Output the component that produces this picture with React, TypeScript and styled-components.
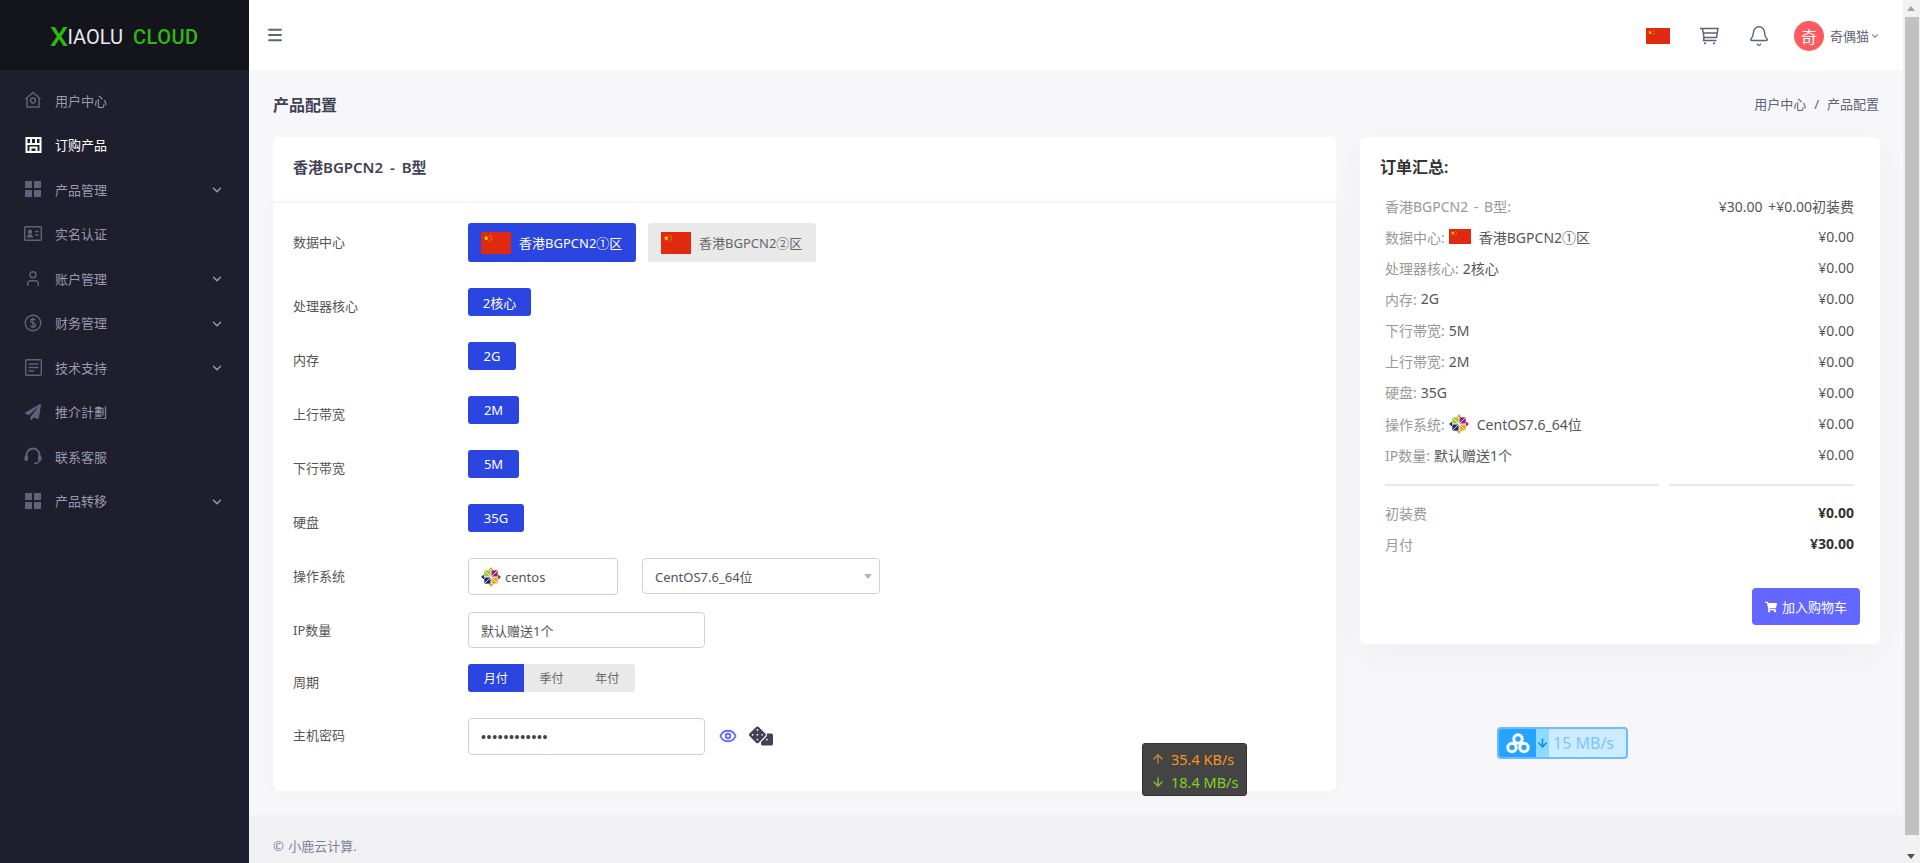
import React from "react";
import styled, { createGlobalStyle } from "styled-components";
import { ArrowDown, ArrowUp, Bell, ChevronDown, Eye, Menu, User } from "lucide-react";
import { FaDice, FaPaperPlane, FaShoppingCart } from "react-icons/fa";

const FONT = `"Noto Sans", "Noto Sans CJK SC", sans-serif`;

const GlobalStyle = createGlobalStyle`
  html, body {
    margin: 0;
    padding: 0;
    height: 863px;
    overflow: hidden;
    background: #f7f7f9;
    font-family: ${FONT};
  }
  * { box-sizing: border-box; }
`;

const Page = styled.div`
  position: relative;
  display: flex;
  width: 1920px;
  height: 863px;
  overflow: hidden;
`;

const Sidebar = styled.aside`
  width: 249px;
  flex-shrink: 0;
  background: #1e1e2d;
`;

const LogoBar = styled.div`
  height: 70px;
  background: #14141d;
  display: flex;
  align-items: center;
  padding: 3px 0 0 50px;
  font-family: Roboto, sans-serif;
  font-size: 20px;
`;

const LogoX = styled.span`
  color: #2fba0e;
  font-weight: 500;
  font-size: 26px;
  line-height: 20px;
  margin-right: 1px;
  transform: scaleX(1.1);
  transform-origin: left center;
`;

const LogoWhite = styled.span`
  color: #e9e9ee;
  margin-right: 10px;
`;

const LogoGreen = styled.span`
  color: #2fba0e;
  font-weight: 500;
  letter-spacing: 0.5px;
`;

const Nav = styled.nav`
  padding-top: 8px;
`;

const NavItem = styled.div<{ $active?: boolean }>`
  height: 44.5px;
  display: flex;
  align-items: center;
  padding: 0 25px 0 24px;
  font-size: 13px;
  color: ${(p) => (p.$active ? "#ffffff" : "#9899ac")};
`;

const NavIcon = styled.span<{ $active?: boolean }>`
  width: 18px;
  height: 18px;
  margin-right: 13px;
  display: flex;
  align-items: center;
  justify-content: center;
  color: ${(p) => (p.$active ? "#ffffff" : "#5f6279")};
`;

const NavText = styled.span`
  flex: 1;
`;

const NavChevron = styled(ChevronDown)`
  color: #9899ac;
  width: 14px;
  height: 14px;
  stroke-width: 2.5;
  margin-top: 2px;
`;

const Main = styled.div`
  flex: 1;
  min-width: 0;
  display: flex;
  flex-direction: column;
`;

const TopBar = styled.header`
  height: 70px;
  background: #fff;
  display: flex;
  align-items: center;
  padding: 0 23px 0 17px;
  color: #5e6278;
`;

const TopRight = styled.div`
  margin-left: auto;
  display: flex;
  align-items: center;
  padding-top: 1px;
`;

const TopFlag = styled.span`
  display: flex;
  margin-right: 28px;
`;

const TopIcon = styled.span`
  display: flex;
  width: 22px;
  justify-content: center;
  margin-right: 28px;
  color: #5e6278;
`;

const Avatar = styled.span`
  width: 30px;
  height: 30px;
  border-radius: 50%;
  background: #ff5a5f;
  color: #fff;
  font-size: 16px;
  display: flex;
  align-items: center;
  justify-content: center;
  margin-left: -4px;
  margin-right: 6px;
`;

const UserName = styled.span`
  font-size: 13px;
  color: #5e6278;
`;

const UserChevron = styled(ChevronDown)`
  width: 10px;
  height: 10px;
  margin-left: 1px;
  stroke-width: 2.5;
`;

const Content = styled.main`
  flex: 1;
  padding: 0 24px 0 24px;
`;

const PageHead = styled.div`
  height: 67px;
  display: flex;
  align-items: center;
  justify-content: space-between;
`;

const PageTitle = styled.h1`
  margin: 0;
  font-size: 16px;
  font-weight: 600;
  color: #3f4254;
`;

const Crumbs = styled.div`
  font-size: 13px;
  color: #5e6278;
`;

const CrumbSep = styled.span`
  margin: 0 8px;
`;

const Columns = styled.div`
  display: grid;
  grid-template-columns: 1063px 520px;
  gap: 24px;
  align-items: start;
`;

const ProductCol = styled.div`
  display: flex;
  flex-direction: column;
  gap: 2px;
`;

const TitleCard = styled.div`
  height: 64px;
  background: #fff;
  border-radius: 6px 6px 0 0;
  display: flex;
  align-items: center;
  padding-left: 20px;
  font-size: 15px;
  word-spacing: 3px;
  font-weight: 600;
  color: #3f4254;
  padding-bottom: 5px;
`;

const FormCard = styled.div`
  height: 588px;
  background: #fff;
  border-radius: 0 0 6px 6px;
  padding: 20px 0 0 20px;
  box-shadow: 0 0 20px rgba(76, 87, 125, 0.03);
`;

const Row = styled.div<{ $gap: number }>`
  display: flex;
  margin-bottom: ${(p) => p.$gap}px;
`;

const Label = styled.div<{ $top: number }>`
  width: 175px;
  flex-shrink: 0;
  font-size: 13px;
  line-height: 20px;
  color: #555;
  padding-top: ${(p) => p.$top}px;
`;

const Options = styled.div`
  display: flex;
  gap: 12px;
`;

const AreaButton = styled.div<{ $active?: boolean }>`
  width: 168px;
  height: 39px;
  border-radius: 3px;
  display: flex;
  align-items: center;
  padding-left: 13px;
  font-size: 13px;
  background: ${(p) => (p.$active ? "#2a45e0" : "#e9e9e9")};
  color: ${(p) => (p.$active ? "#fff" : "#666")};
`;

const AreaFlag = styled.span`
  display: flex;
  margin-right: 8px;
`;

const ChipButton = styled.div<{ $w: number }>`
  width: ${(p) => p.$w}px;
  height: 28px;
  border-radius: 3px;
  background: #2a45e0;
  color: #fff;
  font-size: 13px;
  display: flex;
  align-items: center;
  justify-content: center;
`;

const Field = styled.div<{ $w: number; $h: number }>`
  width: ${(p) => p.$w}px;
  height: ${(p) => p.$h}px;
  border: 1px solid #ced0d6;
  border-radius: 4px;
  background: #fff;
  display: flex;
  align-items: center;
  padding-left: 12px;
  font-size: 13px;
  color: #555;
`;

const OsField = styled(Field)`
  margin-right: 24px;
`;

const SelectField = styled(Field)`
  position: relative;
`;

const Caret = styled.span`
  position: absolute;
  right: 7px;
  top: 15px;
  border: 4px solid transparent;
  border-top: 5px solid #b4b4b4;
`;

const OsName = styled.span`
  margin-left: 4px;
`;

const Segments = styled.div`
  display: flex;
  width: 167px;
  height: 28px;
  border-radius: 3px;
  overflow: hidden;
  background: #e9e9e9;
`;

const Segment = styled.div<{ $active?: boolean }>`
  flex: 1;
  display: flex;
  align-items: center;
  justify-content: center;
  font-size: 12px;
  background: ${(p) => (p.$active ? "#2a45e0" : "transparent")};
  color: ${(p) => (p.$active ? "#fff" : "#666")};
`;

const PasswordText = styled.span`
  font-family: "Liberation Sans", sans-serif;
  font-size: 14px;
  letter-spacing: 0.7px;
  color: #444;
`;

const PasswordTools = styled.div`
  display: flex;
  align-items: center;
  gap: 12px;
  margin: -2px 0 0 14px;
`;

const SummaryCard = styled.aside`
  height: 507px;
  background: #fff;
  border-radius: 6px;
  padding: 20px 26px 0 20px;
  box-shadow: 0 10px 30px rgba(76, 87, 125, 0.05);
`;

const SummaryTitle = styled.h3`
  margin: 0 0 13px 0;
  font-size: 16px;
  line-height: 20px;
  font-weight: 600;
  color: #333;
`;

const SummaryRows = styled.div`
  padding-left: 5px;
`;

const SummaryRow = styled.div`
  height: 31.15px;
  display: flex;
  align-items: center;
  justify-content: space-between;
  font-size: 14px;
  word-spacing: 2px;
  color: #555;
`;

const RowName = styled.span`
  display: flex;
  align-items: center;
`;

const Muted = styled.span`
  color: #999;
  margin-right: 4px;
`;

const InlineLogo = styled.span`
  display: flex;
  margin: 0 8px 0 0;
`;

const Dividers = styled.div`
  display: grid;
  grid-template-columns: 274px 185px;
  gap: 10px;
  margin: 14px 0 0 5px;
`;

const Divider = styled.div`
  height: 2px;
  background: #e8e8ea;
`;

const Totals = styled.div`
  margin-top: 11px;
  padding-left: 5px;
`;

const TotalRow = styled.div`
  height: 31px;
  display: flex;
  align-items: center;
  justify-content: space-between;
  font-size: 14px;
  color: #999;
`;

const TotalValue = styled.span`
  font-weight: 700;
  color: #333;
`;

const CartRow = styled.div`
  display: flex;
  justify-content: flex-end;
  margin: 29px -6px 0 0;
`;

const CartButton = styled.div`
  width: 108px;
  height: 37px;
  border-radius: 4px;
  background: #6366ff;
  color: #fff;
  font-size: 13px;
  display: flex;
  align-items: center;
  justify-content: center;
  gap: 5px;
`;

const Footer = styled.footer`
  height: 48px;
  background: #f1f1f4;
  display: flex;
  align-items: center;
  padding: 12px 0 0 24px;
  font-size: 13px;
  word-spacing: 1px;
  color: #7e8299;
`;

const Scrollbar = styled.div`
  position: relative;
  width: 17px;
  flex-shrink: 0;
  background: #f1f1f1;
`;

const ScrollThumb = styled.div`
  position: absolute;
  left: 2px;
  right: 1px;
  top: 17px;
  height: 818px;
  background: #c1c1c1;
`;

const ScrollArrow = styled.span<{ $down?: boolean }>`
  position: absolute;
  left: 4px;
  border: 4px solid transparent;
  ${(p) =>
    p.$down
      ? "bottom: 4px; border-top: 5px solid #505050; border-bottom: 0;"
      : "top: 6px; border-bottom: 5px solid #a3a3a3; border-top: 0;"}
`;

const SpeedBadge = styled.div`
  position: absolute;
  left: 1142px;
  top: 743px;
  width: 105px;
  height: 53px;
  background: #444;
  border: 1px solid #333;
  border-radius: 3px;
  padding: 3px 0 0 8px;
  font-size: 14.5px;
`;

const SpeedLine = styled.div<{ $color: string; $arrow: string }>`
  height: 23.5px;
  display: flex;
  align-items: center;
  gap: 6px;
  color: ${(p) => p.$color};
  svg {
    color: ${(p) => p.$arrow};
  }
`;

const DiskBadge = styled.div`
  position: absolute;
  left: 1497px;
  top: 727px;
  width: 131px;
  height: 32px;
  border-radius: 4px;
  border: 2px solid #6cbcff;
  background: #ccecff;
  display: flex;
  align-items: center;
  overflow: hidden;
`;

const DiskLogo = styled.span`
  width: 37px;
  height: 100%;
  background: #24a5ff;
  display: flex;
  align-items: center;
  justify-content: center;
`;

const DiskArrow = styled.span`
  width: 13px;
  height: 100%;
  background: #8ddcff;
  color: #0490e6;
  display: flex;
  align-items: center;
  justify-content: center;
`;

const DiskSpeed = styled.span`
  margin-left: 4px;
  font-size: 16px;
  color: #7cc6fb;
`;

const FlagIcon: React.FC<{ w: number; h: number }> = ({ w, h }) => (
  <svg width={w} height={h} viewBox="0 0 30 20" preserveAspectRatio="none">
    <rect width="30" height="20" fill="#e02a10" />
    <g transform="translate(1.5 1.5) scale(0.75)">
      <polygon points="5,2 5.9,4.4 8.4,4.4 6.4,6 7.1,8.4 5,7 2.9,8.4 3.6,6 1.6,4.4 4.1,4.4" fill="#ffde00" />
      <circle cx="10" cy="2.2" r="0.8" fill="#f5b400" />
      <circle cx="12" cy="4.2" r="0.8" fill="#f5b400" />
      <circle cx="12" cy="7" r="0.8" fill="#f5b400" />
      <circle cx="10" cy="9" r="0.8" fill="#f5b400" />
    </g>
  </svg>
);

const CentosIcon: React.FC<{ size: number }> = ({ size }) => (
  <svg width={size} height={size} viewBox="0 0 24 24">
    <polygon points="12,0 15,3.5 9,3.5" fill="#efa724" />
    <polygon points="24,12 20.5,15 20.5,9" fill="#932279" />
    <polygon points="12,24 9,20.5 15,20.5" fill="#9ccd2a" />
    <polygon points="0,12 3.5,9 3.5,15" fill="#262577" />
    <rect x="4" y="4" width="7.4" height="7.4" fill="#9ccd2a" />
    <rect x="12.6" y="4" width="7.4" height="7.4" fill="#932279" />
    <rect x="12.6" y="12.6" width="7.4" height="7.4" fill="#efa724" />
    <rect x="4" y="12.6" width="7.4" height="7.4" fill="#262577" />
    <path d="M4 4l7.4 7.4M20 4l-7.4 7.4M20 20l-7.4-7.4M4 20l7.4-7.4" stroke="#fff" strokeWidth="1" />
  </svg>
);

const HomeIcon = () => (
  <svg width="18" height="18" viewBox="0 0 18 18" fill="none" stroke="currentColor" strokeWidth="1.5">
    <path d="M1.5 8 9 1.5 16.5 8M3 7v9h12V7" />
    <circle cx="9" cy="9.5" r="2.4" />
  </svg>
);

const ShopIcon = () => (
  <svg width="17" height="16" viewBox="0 0 17 16" fill="none" stroke="currentColor" strokeWidth="2">
    <path d="M1.5 1h14v14h-14zM1.5 7h14M6 1v6M11 1v6" />
    <path d="M5.5 15v-4.5h6V15" />
  </svg>
);

const GridIcon = () => (
  <svg width="16" height="16" viewBox="0 0 16 16" fill="currentColor">
    <rect width="7" height="7" />
    <rect x="9" width="7" height="7" />
    <rect y="9" width="7" height="7" />
    <rect x="9" y="9" width="7" height="7" />
  </svg>
);

const IdIcon = () => (
  <svg width="18" height="15" viewBox="0 0 18 15" fill="none" stroke="currentColor" strokeWidth="1.4">
    <rect x="0.7" y="0.7" width="16.6" height="13.6" rx="1" />
    <circle cx="6" cy="5.8" r="1.5" fill="currentColor" />
    <path d="M3.5 10.8c.4-2.6 4.6-2.6 5 0z" fill="currentColor" />
    <path d="M11 5.5h3.5M11 9h3.5" />
  </svg>
);

const CoinIcon = () => (
  <svg width="18" height="18" viewBox="0 0 18 18" fill="none" stroke="currentColor" strokeWidth="1.4">
    <circle cx="9" cy="9" r="7.8" />
    <path d="M11.5 6.3C11 5.3 10 5 9 5 7.6 5 6.6 5.7 6.6 6.9 6.6 9.5 11.6 8.3 11.6 11 11.6 12.3 10.5 13 9 13 7.8 13 6.8 12.6 6.3 11.6M9 3.7v10.6" strokeWidth="1.3" />
  </svg>
);

const ArticleIcon = () => (
  <svg width="17" height="17" viewBox="0 0 17 17" fill="none" stroke="currentColor" strokeWidth="1.4">
    <rect x="0.7" y="0.7" width="15.6" height="15.6" rx="1" />
    <path d="M3.5 5h10M3.5 8.5h10M3.5 12h5.5" />
  </svg>
);

const HeadsetIcon = () => (
  <svg width="18" height="18" viewBox="0 0 18 18" fill="none" stroke="currentColor" strokeWidth="2">
    <path d="M2.5 10V8a6.5 6.5 0 0 1 13 0v2" />
    <path d="M15.5 12c0 3-2 4.5-5.5 4.5" strokeWidth="1.5" />
    <rect x="0.5" y="8.5" width="3.5" height="5.5" rx="1.5" fill="currentColor" stroke="none" />
    <rect x="14" y="8.5" width="3.5" height="5.5" rx="1.5" fill="currentColor" stroke="none" />
  </svg>
);

const TopCartIcon = () => (
  <svg width="20" height="18" viewBox="0 0 20 18" fill="none" stroke="currentColor" strokeWidth="1.5">
    <path d="M1 1.5h18l-1.5 9H5L3.5 1.500" />
    <path d="M4.300 6h14" />
    <path d="M5 10.500l-.5 3h13" />
    <circle cx="6" cy="16.300" r="1.100" fill="currentColor" stroke="none" />
    <circle cx="15" cy="16.300" r="1.100" fill="currentColor" stroke="none" />
  </svg>
);

const CloudLogo = () => (
  <svg width="24" height="21" viewBox="0 0 24 21" fill="none" stroke="#fff" strokeWidth="3">
    <circle cx="12" cy="6" r="4.2" />
    <circle cx="6" cy="14.5" r="4.2" />
    <circle cx="18" cy="14.5" r="4.2" />
  </svg>
);

const navItems = [
  { text: "用户中心", icon: <HomeIcon /> },
  { text: "订购产品", icon: <ShopIcon />, active: true },
  { text: "产品管理", icon: <GridIcon />, more: true },
  { text: "实名认证", icon: <IdIcon /> },
  { text: "账户管理", icon: <User size={19} strokeWidth={1.8} />, more: true },
  { text: "财务管理", icon: <CoinIcon />, more: true },
  { text: "技术支持", icon: <ArticleIcon />, more: true },
  { text: "推介計劃", icon: <FaPaperPlane size={16} /> },
  { text: "联系客服", icon: <HeadsetIcon /> },
  { text: "产品转移", icon: <GridIcon />, more: true },
];

const chipRows = [
  { label: "处理器核心", value: "2核心", w: 63 },
  { label: "内存", value: "2G", w: 48 },
  { label: "上行帯宽", value: "2M", w: 51 },
  { label: "下行帯宽", value: "5M", w: 51 },
  { label: "硬盘", value: "35G", w: 56 },
];

const plainSummary = [
  { name: "处理器核心", value: "2核心" },
  { name: "内存", value: "2G" },
  { name: "下行帯宽", value: "5M" },
  { name: "上行帯宽", value: "2M" },
  { name: "硬盘", value: "35G" },
];

const App: React.FC = () => {
  return (
    <Page>
      <GlobalStyle />
      <Sidebar>
        <LogoBar>
          <LogoX>X</LogoX>
          <LogoWhite>IAOLU</LogoWhite>
          <LogoGreen>CLOUD</LogoGreen>
        </LogoBar>
        <Nav>
          {navItems.map((item) => (
            <NavItem key={item.text} $active={item.active}>
              <NavIcon $active={item.active}>{item.icon}</NavIcon>
              <NavText>{item.text}</NavText>
              {item.more && <NavChevron />}
            </NavItem>
          ))}
        </Nav>
      </Sidebar>

      <Main>
        <TopBar>
          <Menu size={18} strokeWidth={2.4} />
          <TopRight>
            <TopFlag>
              <FlagIcon w={24} h={16} />
            </TopFlag>
            <TopIcon>
              <TopCartIcon />
            </TopIcon>
            <TopIcon>
              <Bell size={22} strokeWidth={1.6} />
            </TopIcon>
            <Avatar>奇</Avatar>
            <UserName>奇偶猫</UserName>
            <UserChevron />
          </TopRight>
        </TopBar>

        <Content>
          <PageHead>
            <PageTitle>产品配置</PageTitle>
            <Crumbs>
              用户中心<CrumbSep>/</CrumbSep>产品配置
            </Crumbs>
          </PageHead>
          <Columns>
            <ProductCol>
              <TitleCard>香港BGPCN2 - B型</TitleCard>
              <FormCard>
                <Row $gap={26}>
                  <Label $top={9}>数据中心</Label>
                  <Options>
                    <AreaButton $active>
                      <AreaFlag>
                        <FlagIcon w={30} h={22} />
                      </AreaFlag>
                      香港BGPCN2①区
                    </AreaButton>
                    <AreaButton>
                      <AreaFlag>
                        <FlagIcon w={30} h={22} />
                      </AreaFlag>
                      香港BGPCN2②区
                    </AreaButton>
                  </Options>
                </Row>
                {chipRows.map((row) => (
                  <Row key={row.label} $gap={26}>
                    <Label $top={8}>{row.label}</Label>
                    <ChipButton $w={row.w}>{row.value}</ChipButton>
                  </Row>
                ))}
                <Row $gap={17}>
                  <Label $top={8}>操作系统</Label>
                  <OsField $w={150} $h={37}>
                    <CentosIcon size={20} />
                    <OsName>centos</OsName>
                  </OsField>
                  <SelectField $w={238} $h={36}>
                    CentOS7.6_64位
                    <Caret />
                  </SelectField>
                </Row>
                <Row $gap={16}>
                  <Label $top={8}>IP数量</Label>
                  <Field $w={237} $h={36}>
                    默认赠送1个
                  </Field>
                </Row>
                <Row $gap={26}>
                  <Label $top={8}>周期</Label>
                  <Segments>
                    <Segment $active>月付</Segment>
                    <Segment>季付</Segment>
                    <Segment>年付</Segment>
                  </Segments>
                </Row>
                <Row $gap={0}>
                  <Label $top={7}>主机密码</Label>
                  <Field $w={237} $h={37}>
                    <PasswordText>••••••••••••</PasswordText>
                  </Field>
                  <PasswordTools>
                    <Eye size={18} strokeWidth={2.5} color="#6366ff" />
                    <FaDice size={24} color="#3f4254" />
                  </PasswordTools>
                </Row>
              </FormCard>
            </ProductCol>

            <SummaryCard>
              <SummaryTitle>订单汇总:</SummaryTitle>
              <SummaryRows>
                <SummaryRow>
                  <Muted>香港BGPCN2 - B型:</Muted>
                  <span>¥30.00 +¥0.00初装费</span>
                </SummaryRow>
                <SummaryRow>
                  <RowName>
                    <Muted>数据中心:</Muted>
                    <InlineLogo>
                      <FlagIcon w={22} h={15} />
                    </InlineLogo>
                    香港BGPCN2①区
                  </RowName>
                  <span>¥0.00</span>
                </SummaryRow>
                {plainSummary.map((row) => (
                  <SummaryRow key={row.name}>
                    <RowName>
                      <Muted>{row.name}:</Muted>
                      {row.value}
                    </RowName>
                    <span>¥0.00</span>
                  </SummaryRow>
                ))}
                <SummaryRow>
                  <RowName>
                    <Muted>操作系统:</Muted>
                    <InlineLogo>
                      <CentosIcon size={20} />
                    </InlineLogo>
                    CentOS7.6_64位
                  </RowName>
                  <span>¥0.00</span>
                </SummaryRow>
                <SummaryRow>
                  <RowName>
                    <Muted>IP数量:</Muted>
                    默认赠送1个
                  </RowName>
                  <span>¥0.00</span>
                </SummaryRow>
              </SummaryRows>
              <Dividers>
                <Divider />
                <Divider />
              </Dividers>
              <Totals>
                <TotalRow>
                  初装费
                  <TotalValue>¥0.00</TotalValue>
                </TotalRow>
                <TotalRow>
                  月付
                  <TotalValue>¥30.00</TotalValue>
                </TotalRow>
              </Totals>
              <CartRow>
                <CartButton>
                  <FaShoppingCart size={12} />
                  加入购物车
                </CartButton>
              </CartRow>
            </SummaryCard>
          </Columns>
        </Content>

        <Footer>© 小鹿云计算.</Footer>
      </Main>

      <Scrollbar>
        <ScrollArrow />
        <ScrollThumb />
        <ScrollArrow $down />
      </Scrollbar>

      <SpeedBadge>
        <SpeedLine $color="#f7941d" $arrow="#c98a2e">
          <ArrowUp size={14} strokeWidth={2.4} />
          35.4 KB/s
        </SpeedLine>
        <SpeedLine $color="#7ed321" $arrow="#78c23a">
          <ArrowDown size={14} strokeWidth={2.4} />
          18.4 MB/s
        </SpeedLine>
      </SpeedBadge>

      <DiskBadge>
        <DiskLogo>
          <CloudLogo />
        </DiskLogo>
        <DiskArrow>
          <ArrowDown size={16} strokeWidth={3} />
        </DiskArrow>
        <DiskSpeed>15 MB/s</DiskSpeed>
      </DiskBadge>
    </Page>
  );
};

export default App;
